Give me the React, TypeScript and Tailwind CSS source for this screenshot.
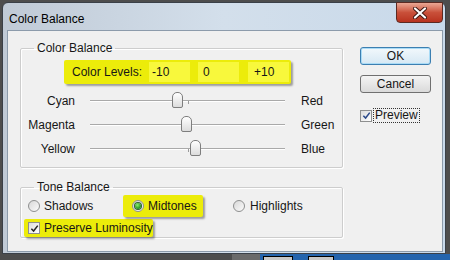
import React from 'react';

const font = "font-['Liberation_Sans',Arial,sans-serif]";

// Win7-style check glyph
const Check = ({ color }: { color: string }) => (
    <svg viewBox="0 0 10 10" className="w-[9px] h-[9px]">
        <path d="M1.5 5.2 L4 7.8 L8.6 1.8" fill="none" stroke={color} strokeWidth="1.7" />
    </svg>
);

const CheckBox = ({ color }: { color: string }) => (
    <div className="w-[12px] h-[12px] border border-[#8e8f8f] bg-gradient-to-br from-[#dcdcdc] to-white flex items-center justify-center">
        <Check color={color} />
    </div>
);

const Radio = ({ on }: { on?: boolean }) => (
    <div className="w-[12px] h-[12px] rounded-full border border-[#8e8f8f] bg-gradient-to-br from-[#d8d8d8] to-[#fbfbfb] flex items-center justify-center">
        {on && <div className="w-[6px] h-[6px] rounded-full bg-[radial-gradient(circle_at_40%_35%,#8df06a,#1d8f1d_70%)] shadow-[0_0_0_1px_#2f5f2f]" />}
    </div>
);

const SliderRow = ({ left, right, thumb }: { left: string; right: string; thumb: string }) => (
    <div className="h-[24px] flex items-center">
        <div className="w-[54px] text-right">{left}</div>
        <div className="relative ml-[15px] w-[195px] h-[24px]">
            <div className="absolute left-0 right-0 top-[11px] h-[1px] bg-[#a9a9a9] shadow-[0_1px_0_#ffffff]" />
            <div className="absolute left-[98px] top-[12px] w-[1px] h-[3px] bg-[#9a9a9a]" />
            <div className={`absolute ${thumb} top-[3px] w-[11px] h-[16px] rounded-t-[5px] rounded-b-[2px] border border-[#7e7e7e] bg-gradient-to-b from-white to-[#dcdcdc]`} />
        </div>
        <div className="ml-[16px]">{right}</div>
    </div>
);

const LevelBox = ({ value, pad }: { value: string; pad: string }) => (
    <div className={`h-[20px] w-[41px] bg-[#f8f83c] flex items-center ${pad}`}>{value}</div>
);

export default function App() {
    return (
        <div className={`w-[450px] h-[260px] bg-[#4d4d4d] flex flex-col overflow-hidden text-[12px] text-[#161616] ${font}`}>
            {/* Dialog window */}
            <div className="ml-[2px] mt-[2px] w-[444px] h-[252px] shrink-0 border border-[#3a4048] rounded-t-[6px] bg-gradient-to-r from-[#c0cad6] via-[#d3dfeb] to-[#c8d9ea] flex flex-col pl-[4px] pr-[2px] pb-[1px]">
                {/* Title bar */}
                <div className="h-[27px] flex items-start justify-between">
                    <div className="pl-[2px] pt-[9px] text-[12px] leading-[14px] text-black">Color Balance</div>
                    <div className="mt-[-1px] w-[47px] h-[21px] rounded-b-[4px] border border-[#5b2a22] bg-gradient-to-b from-[#e9a794] via-[#c9503a] to-[#b8321e] flex items-center justify-center">
                        <svg viewBox="0 0 14 12" className="w-[14px] h-[12px]">
                            <path d="M2 1.5 L12 10.5 M12 1.5 L2 10.5" stroke="#3c1510" strokeWidth="4" strokeLinecap="round" />
                            <path d="M2 1.5 L12 10.5 M12 1.5 L2 10.5" stroke="#ffffff" strokeWidth="2.2" strokeLinecap="round" />
                        </svg>
                    </div>
                </div>

                {/* Client area */}
                <div className="flex-1 bg-[#f0f0f0] border border-[#8c9bab] flex">
                    <div className="pl-[12px] pt-[10px]">
                        <fieldset className="w-[323px] border border-[#cdcdcd] shadow-[inset_1px_1px_0_#ffffff,1px_1px_0_#ffffff] rounded-[2px] pb-[6px]">
                            <legend className="ml-[13px] px-[3px] leading-[14px]">Color Balance</legend>
                            <div className="mt-[5px] ml-[43px] w-[227px] h-[24px] bg-[#ecec0a] rounded-[2px] shadow-[2px_2px_2px_rgba(0,0,0,0.35)] flex items-center">
                                <div className="pl-[8px] w-[85px]">Color Levels:</div>
                                <LevelBox value="-10" pad="pl-[3px]" />
                                <div className="w-[8px]" />
                                <LevelBox value="0" pad="pl-[5px]" />
                                <div className="w-[9px]" />
                                <LevelBox value="+10" pad="pl-[6px]" />
                            </div>
                            <div className="mt-[5px]">
                                <SliderRow left="Cyan" right="Red" thumb="left-[82px]" />
                                <SliderRow left="Magenta" right="Green" thumb="left-[91px]" />
                                <SliderRow left="Yellow" right="Blue" thumb="left-[100px]" />
                            </div>
                        </fieldset>

                        <fieldset className="mt-[12px] w-[323px] h-[58px] border border-[#cdcdcd] shadow-[inset_1px_1px_0_#ffffff,1px_1px_0_#ffffff] rounded-[2px]">
                            <legend className="ml-[13px] px-[3px] leading-[14px]">Tone Balance</legend>
                            <div className="mt-[1px] h-[22px] flex items-center pl-[7px]">
                                <div className="w-[95px] flex items-center gap-[4px]">
                                    <Radio />
                                    <span>Shadows</span>
                                </div>
                                <div className="w-[80px] h-[22px] bg-[#ecec0a] rounded-[2px] shadow-[2px_2px_2px_rgba(0,0,0,0.35)] flex items-center gap-[4px] pl-[9px]">
                                    <Radio on />
                                    <span>Midtones</span>
                                </div>
                                <div className="ml-[30px] flex items-center gap-[5px]">
                                    <Radio />
                                    <span>Highlights</span>
                                </div>
                            </div>
                            <div className="mt-[2px] ml-[3px] w-[129px] h-[18px] bg-[#ecec0a] rounded-[2px] shadow-[2px_2px_2px_rgba(0,0,0,0.35)] flex items-center gap-[4px] pl-[4px]">
                                <CheckBox color="#262626" />
                                <span>Preserve Luminosity</span>
                            </div>
                        </fieldset>
                    </div>

                    {/* Buttons */}
                    <div className="ml-[17px] pt-[16px] w-[71px] flex flex-col">
                        <div className="h-[18px] rounded-[3px] border border-[#3c7fb1] bg-gradient-to-b from-[#f2f8fc] to-[#d6e8f4] shadow-[inset_0_0_0_1px_#a9dbf6] flex items-center justify-center">OK</div>
                        <div className="mt-[10px] h-[18px] rounded-[3px] border border-[#707070] bg-gradient-to-b from-[#f4f4f4] to-[#dadada] flex items-center justify-center">Cancel</div>
                        <div className="mt-[15px] flex items-center gap-[1px]">
                            <CheckBox color="#2c4a8a" />
                            <span className="border border-dotted border-[#333] px-[1px] leading-[13px]">Preview</span>
                        </div>
                    </div>
                </div>
            </div>

            {/* Desktop behind the dialog */}
            <div className="flex-1 flex">
                <div className="w-[232px] bg-[#4d4d4d]" />
                <div className="w-[28px] bg-[#6a6a6a]" />
                <div className="flex-1 bg-[#2464ad] flex items-end pl-[3px] gap-[15px]">
                    <div className="w-[30px] h-[4px] bg-[#c8c8c8] border border-b-0 border-black" />
                    <div className="w-[26px] h-[4px] bg-[#c8c8c8] border border-b-0 border-black" />
                </div>
            </div>
        </div>
    );
}
